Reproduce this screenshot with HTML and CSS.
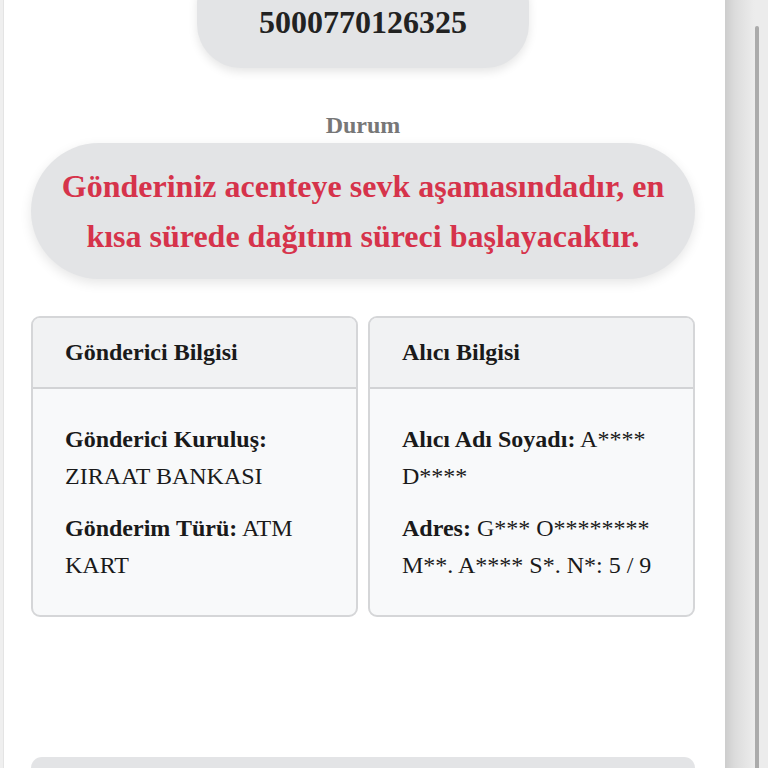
FILE: index.html
```html
<!DOCTYPE html>
<html lang="tr">
<head>
<meta charset="utf-8">
<title>Gönderi Takip</title>
<link rel="stylesheet" href="styles.css">
</head>
<body>
<main class="panel">
  <div class="code-pill">5000770126325</div>
  <div class="label">Durum</div>
  <div class="status-pill">Gönderiniz acenteye sevk aşamasındadır, en kısa sürede dağıtım süreci başlayacaktır.</div>
  <div class="cards">
    <section class="card">
      <header class="card-head">Gönderici Bilgisi</header>
      <div class="card-body">
        <p class="row"><b>Gönderici Kuruluş:</b> ZIRAAT BANKASI</p>
        <p class="row"><b>Gönderim Türü:</b> ATM KART</p>
      </div>
    </section>
    <section class="card">
      <header class="card-head">Alıcı Bilgisi</header>
      <div class="card-body">
        <p class="row"><b>Alıcı Adı Soyadı:</b> A**** D****</p>
        <p class="row"><b>Adres:</b> G*** O******** M**. A**** S*. N*: 5 / 9</p>
      </div>
    </section>
  </div>
  <div class="next-box"></div>
</main>
<aside class="strip"><div class="strip-line"></div></aside>
</body>
</html>
```

FILE: styles.css
```css
html, body {
  margin: 0;
  padding: 0;
}
body {
  background: #efefef;
  display: flex;
  height: 768px;
  overflow: hidden;
  font-family: "Liberation Serif", "Times New Roman", serif;
  color: #1a1a1a;
}
.panel {
  box-sizing: border-box;
  width: 722px;
  margin-left: 3px;
  background: #fff;
  border-left: 1px solid #e4e4e4;
  padding: 0 30px 0 27px;
  display: flex;
  flex-direction: column;
  align-items: center;
}
.code-pill {
  margin-top: -40px;
  padding: 40px 62px 24px;
  background: #e3e4e6;
  border-radius: 44px;
  box-shadow: 0 4px 10px rgba(0, 0, 0, 0.10);
  font-size: 32px;
  line-height: 44px;
  font-weight: bold;
  color: #222;
}
.label {
  margin-top: 42px;
  font-size: 24px;
  line-height: 30px;
  font-weight: bold;
  color: #777;
}
.status-pill {
  box-sizing: border-box;
  align-self: stretch;
  margin-top: 3px;
  padding: 18px 24px;
  background: #e3e4e6;
  border-radius: 70px;
  box-shadow: 0 4px 12px rgba(0, 0, 0, 0.10);
  text-align: center;
  color: #d6334b;
  font-weight: bold;
  font-size: 32px;
  line-height: 50px;
}
.cards {
  align-self: stretch;
  margin-top: 37px;
  display: grid;
  grid-template-columns: 1fr 1fr;
  gap: 10px;
}
.card {
  border: 2px solid #d5d6d8;
  border-radius: 9px;
  background: #f8f9fa;
  overflow: hidden;
}
.card-head {
  background: #f1f2f3;
  border-bottom: 2px solid #d2d3d5;
  padding: 16px 32px 16px;
  font-size: 24px;
  line-height: 37px;
  font-weight: bold;
}
.card-body {
  padding: 32px 32px 31px;
}
.row {
  margin: 0;
  font-size: 24px;
  line-height: 37px;
}
.row + .row {
  margin-top: 15px;
}
.next-box {
  align-self: stretch;
  margin-top: 140px;
  height: 60px;
  background: #e3e4e6;
  border-radius: 14px 14px 0 0;
}
.strip {
  flex: 1;
  display: flex;
  background: linear-gradient(to right, #cdcdcd 0, #dcdcdc 10px, #ebebeb 28px, #ececec 30px);
}
.strip-line {
  margin-top: 26px;
  margin-left: 30px;
  width: 4px;
  background: #ababab;
  border-radius: 2px 2px 0 0;
}
```
